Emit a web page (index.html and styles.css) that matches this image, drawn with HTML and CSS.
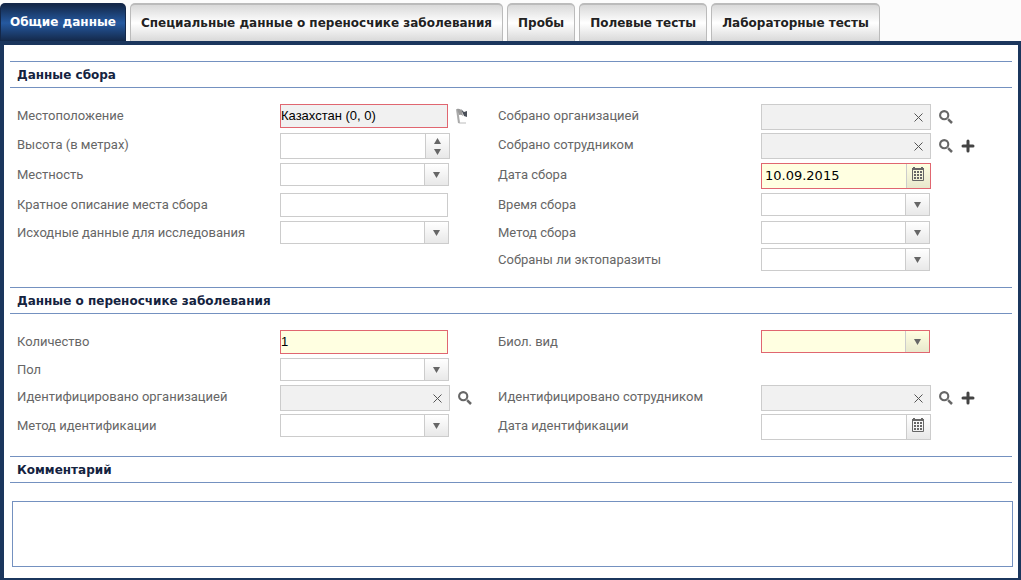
FILE: index.html
```html
<!DOCTYPE html>
<html lang="ru">
<head>
<meta charset="utf-8">
<title>Общие данные</title>
<link rel="stylesheet" href="styles.css">
</head>
<body>
<svg class="defs" aria-hidden="true">
  <symbol id="search" viewBox="0 0 14 14"><circle cx="5.200" cy="5.200" r="4.100" fill="none" stroke="#666" stroke-width="2.100"/><path d="M8 8l1.600 1.600" stroke="#888" stroke-width="1.400"/><path d="M9.300 9.300L13 13" stroke="#666" stroke-width="2.500"/></symbol>
  <symbol id="plus" viewBox="0 0 14 14"><path d="M7 2v10M2 7h10" stroke="#444" stroke-width="3" stroke-linecap="round"/></symbol>
  <symbol id="clear" viewBox="0 0 9 9"><path d="M.5.5l8 8M8.500.5l-8 8" stroke="#555" stroke-width="1"/></symbol>
  <symbol id="calendar" viewBox="0 0 12 14"><path d="M.5 2v11.500h11V2" fill="none" stroke="#666"/><path d="M0 1h1V0h2v1h6V0h2v1h1v2H0z" fill="#666"/><path d="M2 4h2v2H2zM5 4h2v2H5zM8 4h2v2H8zM2 7h2v2H2zM5 7h2v2H5zM8 7h2v2H8zM2 10h2v2H2zM5 10h2v2H5zM8 10h2v2H8z" fill="#666"/></symbol>
</svg>
<nav class="tabs">
  <button class="tab tab-active" type="button">Общие данные</button>
  <button class="tab" type="button">Специальные данные о переносчике заболевания</button>
  <button class="tab" type="button">Пробы</button>
  <button class="tab" type="button">Полевые тесты</button>
  <button class="tab" type="button">Лабораторные тесты</button>
</nav>
<main class="panel">
  <section>
    <h2 class="heading">Данные сбора</h2>
    <div class="fields fields-collection">
      <label for="location">Местоположение</label>
      <div class="control"><input class="text readonly required" id="location" value="Казахстан (0, 0)" readonly><button class="icon" type="button" aria-label="Карта"><svg width="12" height="16" viewBox="0 0 12 16"><path d="M3 15h7" stroke="#ddd" stroke-width="2"/><path d="M1 1l2 14" stroke="#aaa" stroke-width="2"/><path d="M1 1q3-1 5 2l1 5q-2-2-4-1z" fill="#999"/><path d="M5 1l3 3 3-1v6L8 8z" fill="#4a4f58"/></svg></button></div>
      <label for="org">Собрано организацией</label>
      <div class="control"><div class="box readonly"><input id="org" readonly><button type="button" aria-label="Очистить"><svg width="9" height="9"><use href="#clear"/></svg></button></div><button class="icon" type="button" aria-label="Поиск"><svg width="14" height="14"><use href="#search"/></svg></button></div>

      <label for="height">Высота (в метрах)</label>
      <div class="control"><div class="box"><input id="height"><span class="spin"><button type="button" aria-label="Больше"><svg width="7" height="6" viewBox="0 0 7 6"><path d="M3.500 0L7 6H0z" fill="#666"/></svg></button><button type="button" aria-label="Меньше"><svg width="7" height="6" viewBox="0 0 7 6"><path d="M0 0h7L3.500 6z" fill="#666"/></svg></button></span></div></div>
      <label for="person">Собрано сотрудником</label>
      <div class="control"><div class="box readonly"><input id="person" readonly><button type="button" aria-label="Очистить"><svg width="9" height="9"><use href="#clear"/></svg></button></div><button class="icon" type="button" aria-label="Поиск"><svg width="14" height="14"><use href="#search"/></svg></button><button class="icon" type="button" aria-label="Добавить"><svg width="14" height="14"><use href="#plus"/></svg></button></div>

      <label for="area">Местность</label>
      <div class="control"><select id="area"></select></div>
      <label for="date">Дата сбора</label>
      <div class="control"><div class="box required filled"><input id="date" value="10.09.2015"><button class="pick" type="button" aria-label="Календарь"><svg width="12" height="14"><use href="#calendar"/></svg></button></div></div>

      <label for="place">Кратное описание места сбора</label>
      <div class="control"><input class="text" id="place"></div>
      <label for="time">Время сбора</label>
      <div class="control"><select id="time"></select></div>

      <label for="source">Исходные данные для исследования</label>
      <div class="control"><select id="source"></select></div>
      <label for="method">Метод сбора</label>
      <div class="control"><select id="method"></select></div>

      <label class="right" for="ecto">Собраны ли эктопаразиты</label>
      <div class="control"><select id="ecto"></select></div>
    </div>
  </section>
  <section>
    <h2 class="heading">Данные о переносчике заболевания</h2>
    <div class="fields fields-vector">
      <label for="count">Количество</label>
      <div class="control"><input class="text required filled" id="count" value="1"></div>
      <label for="species">Биол. вид</label>
      <div class="control"><select class="required filled" id="species"></select></div>

      <label for="sex">Пол</label>
      <div class="control"><select id="sex"></select></div>

      <label class="left" for="id-org">Идентифицировано организацией</label>
      <div class="control"><div class="box readonly"><input id="id-org" readonly><button type="button" aria-label="Очистить"><svg width="9" height="9"><use href="#clear"/></svg></button></div><button class="icon" type="button" aria-label="Поиск"><svg width="14" height="14"><use href="#search"/></svg></button></div>
      <label for="id-person">Идентифицировано сотрудником</label>
      <div class="control"><div class="box readonly"><input id="id-person" readonly><button type="button" aria-label="Очистить"><svg width="9" height="9"><use href="#clear"/></svg></button></div><button class="icon" type="button" aria-label="Поиск"><svg width="14" height="14"><use href="#search"/></svg></button><button class="icon" type="button" aria-label="Добавить"><svg width="14" height="14"><use href="#plus"/></svg></button></div>

      <label for="id-method">Метод идентификации</label>
      <div class="control"><select id="id-method"></select></div>
      <label for="id-date">Дата идентификации</label>
      <div class="control"><div class="box"><input id="id-date"><button class="pick" type="button" aria-label="Календарь"><svg width="12" height="14"><use href="#calendar"/></svg></button></div></div>
    </div>
  </section>
  <section>
    <h2 class="heading"><label for="comment">Комментарий</label></h2>
    <textarea class="comment" id="comment"></textarea>
  </section>
</main>
</body>
</html>
```
FILE: styles.css
```css
* { box-sizing: border-box; }
body {
  margin: 0;
  background: #fcfcfc;
  color: #666;
  font: 12px/16px "DejaVu Sans", sans-serif;
}
button, input, select, textarea { margin: 0; font: inherit; }
button { padding: 0; border: 0; background: none; }
svg { display: block; }
.defs { position: absolute; width: 0; height: 0; }

.tabs { display: flex; gap: 4px; padding-top: 3px; }
.tab {
  height: 38px;
  padding: 0 10px;
  border: 1px solid #bbb;
  border-top-width: 2px;
  border-bottom: 0;
  border-radius: 5px 5px 0 0;
  background: linear-gradient(#d9d9d9, #fff 50%, #d9d9d9);
  color: #222;
  font-weight: bold;
  white-space: nowrap;
}
.tab-active {
  padding: 0 9px 2px;
  border-color: #14284a;
  background: linear-gradient(#14294a, #2559a0 50%, #14294a);
  color: #fff;
}

.panel {
  border: solid #1b365d;
  border-width: 4px 3px 2px 4px;
  padding: 16px 5px 11px 6px;
  background: #fff;
}
.heading {
  margin: 0 1px 0 0;
  padding: 5px 7px 4px;
  border: solid #7491c0;
  border-width: 1px 0;
  color: #14233f;
  font-size: 12px;
  line-height: 16px;
}
.fields {
  display: grid;
  grid-template-columns: 263fr 218fr 263fr 252fr;
  row-gap: 3px;
  align-items: start;
  padding: 16px 0 16px 7px;
}
.fields label { font: 13px/24px Roboto, sans-serif; }
.fields-collection { grid-template-rows: 26px 27px 27px 25px 24px 23px; }
.fields-vector { grid-template-rows: 25px 24px 26px 26px; }
.right { grid-column: 3; }
.left { grid-column: 1; }
.control { display: flex; align-items: center; }

.text, select, .box { border: 1px solid #ccc; background-color: #fff; color: #000; }
.text {
  width: 168px;
  height: 24px;
  padding: 0 0 2px;
  font-family: "Liberation Sans", sans-serif;
  font-size: 13px;
}
select {
  width: 169px;
  height: 23px;
  appearance: none;
  border-radius: 0;
  background-image:
    url("data:image/svg+xml,%3Csvg xmlns='http://www.w3.org/2000/svg' width='7' height='6'%3E%3Cpath d='M0 0h7L3.500 6z' fill='%23666'/%3E%3C/svg%3E"),
    linear-gradient(#ccc, #ccc),
    linear-gradient(rgba(0, 0, 0, 0), rgba(0, 0, 0, .09));
  background-position: right 8px center, right 23px top, right top;
  background-size: 7px 6px, 1px 100%, 23px 100%;
  background-repeat: no-repeat;
}
.box { display: flex; width: 170px; height: 26px; }
.box input { flex: 1; min-width: 0; padding: 0 3px; border: 0; background: none; color: #000; font-size: 13px; }
.box button { display: grid; place-items: center; width: 24px; }
.box .pick, .spin { border-left: 1px solid #ccc; background: linear-gradient(rgba(0, 0, 0, 0), rgba(0, 0, 0, .09)); }
.box .pick { padding: 0 1px 4px 0; }
.spin { display: grid; width: 24px; padding: 2px 0 1px; }
.box .spin button { width: auto; }
.readonly { background-color: #f1f1f1; }
.filled { background-color: #ffffe1; }
.required { border-color: #e06670; }
.icon { margin-left: 8px; }
.comment {
  display: block;
  width: calc(100% - 2px);
  height: 66px;
  margin: 18px 0 0 2px;
  border: 1px solid #7491c0;
  background: #fff;
  resize: none;
}
```
